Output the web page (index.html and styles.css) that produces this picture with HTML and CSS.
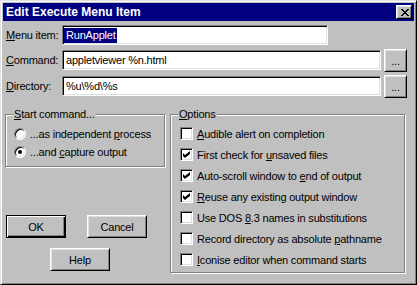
FILE: index.html
```html
<!DOCTYPE html>
<html lang="en">
<head>
    <meta charset="UTF-8">
    <title>Edit Execute Menu Item</title>
    <link rel="stylesheet" href="styles.css">
</head>
<body>

<div class="window">
    <div class="titlebar">
        <span class="title">Edit Execute Menu Item</span>
        <button class="close">
            <svg width="8" height="7" viewBox="0 0 8 7" shape-rendering="crispEdges">
                <path d="M0 0h2v1H0z M6 0h2v1H6z M1 1h2v1H1z M5 1h2v1H5z M2 2h4v1H2z M3 3h2v1H3z M2 4h4v1H2z M1 5h2v1H1z M5 5h2v1H5z M0 6h2v1H0z M6 6h2v1H6z"/>
            </svg>
        </button>
    </div>

    <div class="fields">
        <div class="row first">
            <label><u>M</u>enu item:</label>
            <div class="field short"><span class="sel">RunApplet</span></div>
        </div>
        <div class="row">
            <label><u>C</u>ommand:</label>
            <div class="field">appletviewer %n.html</div>
            <button class="btn browse">...</button>
        </div>
        <div class="row">
            <label><u>D</u>irectory:</label>
            <div class="field">%u\%d\%s</div>
            <button class="btn browse">...</button>
        </div>
    </div>

    <div class="lower">
        <div class="left">
            <div class="group start">
                <span class="legend"><u>S</u>tart command...</span>
                <div class="opt"><span class="radio"></span><span>...as independent <u>p</u>rocess</span></div>
                <div class="opt"><span class="radio on"></span><span>...and <u>c</u>apture output</span></div>
            </div>
            <div class="actions">
                <div class="btn-row">
                    <button class="btn default">OK</button>
                    <button class="btn">Cancel</button>
                </div>
                <button class="btn help">Help</button>
            </div>
        </div>

        <div class="group options">
            <span class="legend"><u>O</u>ptions</span>
            <div class="opt"><span class="check"></span><span><u>A</u>udible alert on completion</span></div>
            <div class="opt"><span class="check on"></span><span>First check for <u>u</u>nsaved files</span></div>
            <div class="opt"><span class="check on"></span><span>Auto-scroll window to <u>e</u>nd of output</span></div>
            <div class="opt"><span class="check on"></span><span><u>R</u>euse any existing output window</span></div>
            <div class="opt"><span class="check"></span><span>Use DOS <u>8</u>.3 names in substitutions</span></div>
            <div class="opt"><span class="check"></span><span>Record directory as absolute <u>p</u>athname</span></div>
            <div class="opt"><span class="check"></span><span><u>I</u>conise editor when command starts</span></div>
        </div>
    </div>
</div>

</body>
</html>
```

FILE: styles.css
```css
body {
    margin: 0;
    background-color: #c0c0c0;
}

.window {
    width: 417px;
    height: 285px;
    box-sizing: border-box;
    background-color: #c0c0c0;
    border: 1px solid;
    border-color: #dfdfdf #000 #000 #dfdfdf;
    box-shadow: inset 1px 1px #fff, inset -1px -1px #808080;
    padding: 2px;
    font: 11px "Liberation Sans", Arial, sans-serif;
    letter-spacing: -0.2px;
    color: #000;
}

u {
    text-decoration-thickness: 1px;
    text-underline-offset: 1px;
}

/* title bar */
.titlebar {
    height: 18px;
    display: flex;
    align-items: center;
    justify-content: space-between;
    padding: 0 2px 0 3px;
    background-color: #000080;
}

.title {
    color: #fff;
    font-weight: bold;
    font-size: 12px;
    letter-spacing: 0;
}

.close {
    width: 16px;
    height: 14px;
    padding: 0 0 0 1px;
    display: flex;
    align-items: center;
    justify-content: center;
    background-color: #c0c0c0;
    border: 1px solid;
    border-color: #fff #000 #000 #fff;
    box-shadow: inset 1px 1px #dfdfdf, inset -1px -1px #808080;
}

/* text fields */
.fields {
    margin-top: 2px;
}

.row {
    display: flex;
    align-items: center;
    height: 26px;
}

.row.first {
    height: 24px;
}

.row label {
    width: 59px;
    box-sizing: border-box;
    padding-left: 3px;
}

.field {
    width: 319px;
    height: 20px;
    box-sizing: border-box;
    padding: 0 3px;
    line-height: 18px;
    background-color: #fff;
    border: 1px solid;
    border-color: #808080 #fff #fff #808080;
    box-shadow: inset 1px 1px #000, inset -1px -1px #dfdfdf;
    white-space: nowrap;
}

.field.short {
    width: 266px;
}

.sel {
    display: inline-block;
    line-height: 15px;
    margin-left: -2px;
    padding: 0 1px 0 2px;
    background-color: #000080;
    color: #fff;
}

/* buttons */
.btn {
    height: 23px;
    width: 60px;
    padding: 0;
    font: inherit;
    letter-spacing: inherit;
    color: #000;
    background-color: #c0c0c0;
    border: 1px solid;
    border-color: #fff #000 #000 #fff;
    box-shadow: inset 1px 1px #dfdfdf, inset -1px -1px #808080;
}

.btn.browse {
    width: 23px;
    margin-left: 3px;
    padding-top: 2px;
}

.btn.default {
    border-color: #000;
    box-shadow: inset 1px 1px #fff, inset -1px -1px #000, inset -2px -2px #808080;
}

/* lower part */
.lower {
    display: flex;
    margin-top: 15px;
    padding-left: 2px;
}

.left {
    width: 165px;
}

.group {
    position: relative;
    box-sizing: border-box;
    border: 1px solid #808080;
    box-shadow: inset 1px 1px #fff, 1px 1px #fff;
}

.legend {
    position: absolute;
    top: -7px;
    left: 7px;
    padding: 0 1px;
    line-height: 13px;
    background-color: #c0c0c0;
}

.start {
    width: 160px;
    height: 53px;
    padding: 10px 0 0 8px;
}

.options {
    width: 235px;
    height: 159px;
    padding: 8px 0 0 9px;
}

.opt {
    display: flex;
    align-items: center;
    white-space: nowrap;
}

.start .opt {
    height: 18px;
}

.options .opt {
    height: 21px;
}

.radio {
    position: relative;
    width: 12px;
    height: 12px;
    box-sizing: border-box;
    margin-right: 4px;
    border-radius: 50%;
    background-color: #fff;
    border: 1px solid;
    border-color: #808080 #fff #fff #808080;
    box-shadow: inset 1px 1px #000, inset -1px -1px #dfdfdf;
}

.radio.on::after {
    content: "";
    position: absolute;
    left: 3px;
    top: 3px;
    width: 4px;
    height: 4px;
    border-radius: 50%;
    background-color: #000;
}

.check {
    position: relative;
    width: 13px;
    height: 13px;
    box-sizing: border-box;
    margin-right: 4px;
    background-color: #fff;
    border: 1px solid;
    border-color: #808080 #fff #fff #808080;
    box-shadow: inset 1px 1px #000, inset -1px -1px #dfdfdf;
}

.check.on::after {
    content: "";
    position: absolute;
    left: 2px;
    top: 2px;
    width: 7px;
    height: 7px;
    background-color: #000;
    clip-path: polygon(0 28%, 28% 57%, 100% 0, 100% 43%, 28% 100%, 0 71%);
}

.actions {
    margin-top: 48px;
}

.btn-row {
    display: flex;
    gap: 21px;
    margin-left: 1px;
}

.btn.help {
    margin: 10px 0 0 45px;
}
```
